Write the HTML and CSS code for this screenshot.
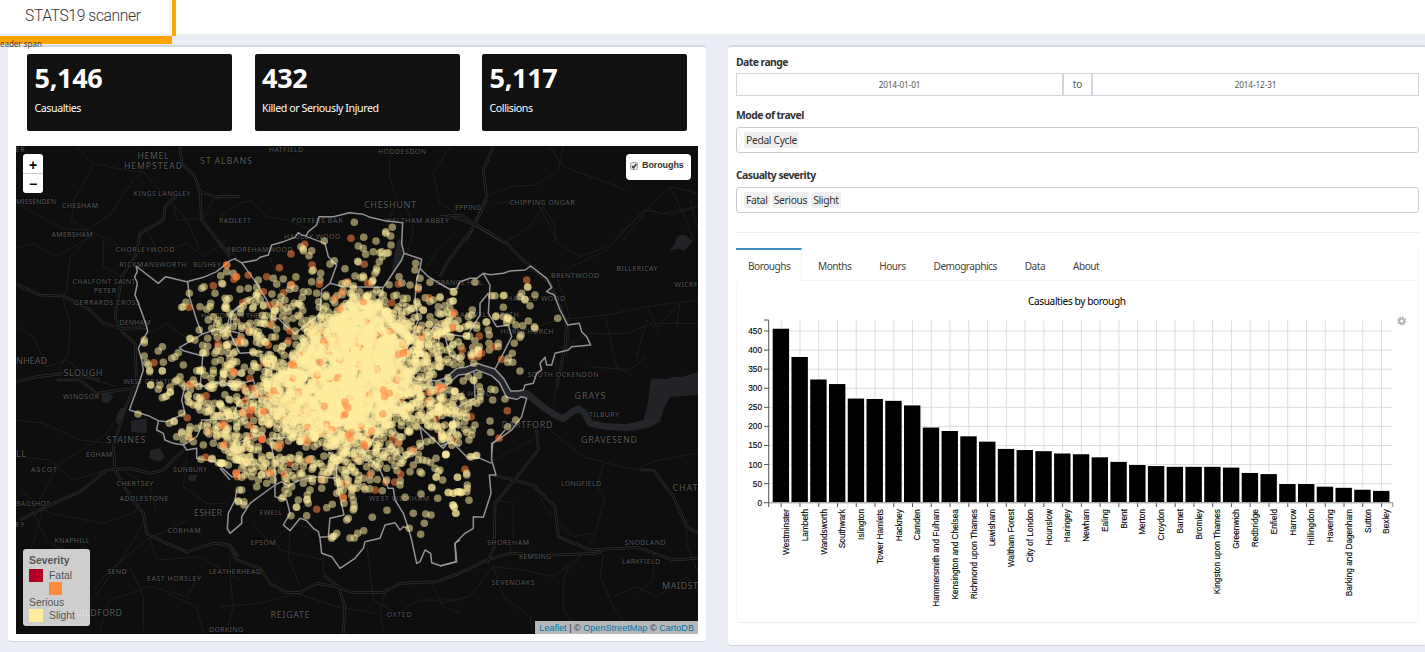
FILE: index.html
```
<!DOCTYPE html>
<html lang="en">
<head>
<meta charset="utf-8">
<title>STATS19 scanner</title>
<link rel="stylesheet" href="styles.css">
</head>
<body>
<header class="header">
  <div class="logo">STATS19 scanner</div>
  <span class="header-span">eader span</span>
</header>
<main class="content">
  <section class="box box-map">
    <div class="cards">
      <div class="card"><h3>5,146</h3><p>Casualties</p></div>
      <div class="card"><h3>432</h3><p>Killed or Seriously Injured</p></div>
      <div class="card"><h3>5,117</h3><p>Collisions</p></div>
    </div>
    <div class="map">
      <svg class="map-svg" viewBox="16 146 682 488">
        <g id="terrain"></g>
        <g id="labels"></g>
        <g id="bounds"></g>
        <g id="dots"></g>
      </svg>
      <div class="zoom"><span>+</span><span>−</span></div>
      <label class="layers"><svg width="8" height="8" viewBox="0 0 8 8"><rect x=".5" y=".5" width="7" height="7" rx="1" fill="#e4e4e4" stroke="#aaa"/><path d="M2 4l1.5 1.8L6.4 2" fill="none" stroke="#333" stroke-width="1.4"/></svg>Boroughs</label>
      <div class="legend">
        <strong>Severity</strong>
        <div class="row"><i class="fatal"></i>Fatal</div>
        <div class="row serious-swatch"><i class="serious"></i></div>
        <div class="row serious-name">Serious</div>
        <div class="row"><i class="slight"></i>Slight</div>
      </div>
      <div class="credit"><a>Leaflet</a> | © <a>OpenStreetMap</a> © <a>CartoDB</a></div>
    </div>
  </section>
  <section class="box box-controls">
    <h4>Date range</h4>
    <div class="dates"><span class="date">2014-01-01</span><span class="to">to</span><span class="date">2014-12-31</span></div>
    <h4 class="mode">Mode of travel</h4>
    <div class="select"><span>Pedal Cycle</span></div>
    <h4 class="severity">Casualty severity</h4>
    <div class="select"><span>Fatal</span><span>Serious</span><span>Slight</span></div>
    <div class="rule"></div>
    <div class="tabbox">
      <nav class="tabs">
        <span class="tab active">Boroughs</span><span class="tab">Months</span><span class="tab">Hours</span><span class="tab">Demographics</span><span class="tab">Data</span><span class="tab">About</span>
      </nav>
      <svg class="chart" id="chart" viewBox="737 281 681 341"></svg>
    </div>
  </section>
</main>
<script src="app.js"></script>
</body>
</html>
```
FILE: styles.css
```
* { box-sizing: border-box; }
body { margin: 0; height: 652px; overflow: hidden; background: #eaeef4; color: #333; font-family: "Noto Sans", sans-serif; font-size: 10.5px; }
h3, h4, p { margin: 0; }
.header { position: relative; height: 34px; background: #fff; }
.logo { position: absolute; left: 0; top: 0; width: 176px; height: 36px; padding-left: 25px; line-height: 32px; border-right: 4px solid #ffa500; font-family: Roboto, sans-serif; font-weight: 300; font-size: 15.6px; color: #333; letter-spacing: -.36px; white-space: nowrap; }
.logo::before { content: ""; position: absolute; left: 169px; top: 0; width: 1px; height: 34px; background: #eef0f4; }
.logo::after { content: ""; position: absolute; left: 0; top: 36px; width: 172px; height: 8px; background: #ffa500; }
.header-span { position: absolute; left: 0; top: 38px; z-index: 3; font-size: 8px; line-height: 12px; color: #444; letter-spacing: -.02px; }
.content { display: grid; grid-template-columns: 698px 1fr; column-gap: 22px; align-items: start; padding: 11px 0 0 8px; }
.box { background: #fff; border-top: 2px solid #d2d6de; border-radius: 3px; box-shadow: 0 1px 1px rgba(0,0,0,.1); }
.box-map { height: 596px; padding: 7px 8px; }
.box-controls { height: 600px; padding: 7px 7px 0 8px; }
.cards { display: grid; grid-template-columns: repeat(3, 205px); column-gap: 22.5px; padding-left: 11px; }
.card { height: 77px; padding: 8px 7.5px; border-radius: 2px; background: #111; color: #fff; }
.card h3 { font-size: 27px; line-height: 31px; font-weight: 700; letter-spacing: -.3px; }
.card p { margin-top: 7px; font-size: 10.6px; line-height: 16px; letter-spacing: -.4px; }
.map { position: relative; height: 488px; margin-top: 15px; overflow: hidden; background: #0e0e0e; font-family: "Liberation Sans", Arial, sans-serif; }
.map-svg { display: block; width: 682px; height: 488px; }
.zoom { position: absolute; left: 7px; top: 8px; width: 20px; height: 39px; border-radius: 3px; background: #fff; color: #000; font-size: 14px; font-weight: 700; text-align: center; }
.zoom span { display: block; height: 19px; line-height: 23px; }
.zoom span + span { border-top: 1px solid #ccc; height: 20px; line-height: 20px; }
.layers { position: absolute; right: 7px; top: 8px; display: flex; gap: 4px; width: 65px; height: 26px; padding: 7px 0 0 4px; border-radius: 4px; background: #fff; font-size: 9px; line-height: 9px; font-weight: 700; letter-spacing: -.1px; }
.layers svg { margin-top: 1px; }
.legend { position: absolute; left: 7px; bottom: 8px; width: 67px; height: 77px; padding: 5px 6px; border-radius: 3px; background: rgba(255,255,255,.8); color: #555; font-size: 10.4px; line-height: 13px; }
.legend strong { display: block; height: 15px; }
.row { display: flex; gap: 6px; height: 13px; align-items: center; }
.row i { width: 14px; height: 13px; }
.row + .row:last-child { height: 14px; }
.serious-swatch { padding-left: 20px; }
.serious-swatch i { width: 13px; }
.serious-name { padding-top: 2px; }
.fatal { background: #b10026; }
.serious { background: #fd8d3c; }
.slight { background: #ffeda0; }
.credit { position: absolute; right: 0; bottom: 0; height: 13px; padding: 0 4px; background: rgba(255,255,255,.7); color: #333; font-size: 9.15px; line-height: 14px; letter-spacing: -.02px; white-space: nowrap; }
.credit a { color: #0078a8; }
.box-controls h4 { height: 16px; font-size: 10.4px; line-height: 16px; font-weight: 700; letter-spacing: -.55px; }
.box-controls .mode { margin-top: 11px; line-height: 17px; }
.box-controls .severity { margin-top: 14px; line-height: 17px; }
.dates { display: flex; height: 23px; margin-top: 3px; line-height: 21px; text-align: center; }
.date { flex: 1; border: 1px solid #d2d6de; font-size: 8.2px; color: #555; letter-spacing: -.1px; }
.to { width: 29px; border: 1px solid #d2d6de; color: #555; font-size: 10px; line-height: 20px; }
.select { display: flex; align-items: center; gap: 2px; height: 26px; margin-top: 4px; padding-left: 7px; border: 1px solid #ccc; border-radius: 3px; }
.select span { height: 16px; padding: 0 2px; border-radius: 2px; background: #efefef; font-size: 10.3px; line-height: 16px; letter-spacing: -.33px; }
.rule { height: 1px; margin-top: 19px; background: #eee; }
.tabbox { height: 375px; margin-top: 15px; border: 1px solid #f7f7f7; border-top: 0; border-bottom: 1px solid #eee; border-radius: 3px; }
.tabs { display: flex; gap: 4px; height: 33px; border-bottom: 1px solid #f4f4f4; }
.tab { padding: 0 12px; border-top: 2px solid transparent; line-height: 33px; color: #444; font-size: 10.1px; letter-spacing: -.5px; }
.tab.active { width: 66px; height: 33px; margin-left: -1px; background: #fff; border-top-color: #3c8dbc; border-right: 1px solid #f4f4f4; }
.chart { display: block; width: 681px; height: 341px; }
.chart text { font-family: "Liberation Sans", Arial, sans-serif; font-size: 8.3px; fill: #000; stroke: #000; stroke-width: .12px; }
.chart .title { font-family: "Noto Sans", sans-serif; font-size: 10.1px; stroke: none; }
.grid { stroke: #ddd; stroke-width: 1; }
.axis { stroke: #555; stroke-width: 1; fill: none; }
.place { fill: #5a5a5a; font-family: "Noto Sans", sans-serif; stroke: #090909; stroke-width: 1.5px; paint-order: stroke; }
.bound { fill: none; stroke: #929296; stroke-width: 4.5; stroke-linejoin: round; }
.lane { fill: none; stroke: #1d1d1d; stroke-width: 3; }
.motor { fill: none; stroke: #303030; stroke-width: 8; stroke-linejoin: round; }
.motor-gap { fill: none; stroke: #0e0e0e; stroke-width: 3.5; stroke-linejoin: round; }
.water { fill: none; stroke: #25262a; stroke-width: 20; stroke-linejoin: round; }
.lake { fill: #222327; }
```
FILE: app.js
```
// Map geometry is stored in tiles: each tile has an origin and 3 units per pixel.
const TILES = { A: [0, 140], B: [220, 200], C: [440, 200], D: [0, 380], E: [220, 400], F: [440, 430], G: [350, 0] };
const tileGroup = (t, body) => `<g transform="translate(${TILES[t]}) scale(.33333)">${body}</g>`;
const byId = id => document.getElementById(id);
const lines = (cls, list) => list.map(p => `<polyline class="${cls}" points="${p}"/>`).join('');

const lanes = {
  A: ['230,20 275,68 370,90 430,95 460,130 500,170 560,240 600,330', '280,75 240,150 220,180 215,240 260,270 330,300 400,350', '50,190 120,230 185,265 260,270 330,225 365,170 400,120 430,95', '270,290 210,350 200,450 190,480 210,550 205,640 170,700', '48,325 100,310 170,350 270,290', '520,190 530,240 610,235 640,180 700,160', '50,560 100,590 140,680 200,660 280,720 350,740', '310,300 310,380 350,400 400,440', '450,580 500,550 540,580 600,620', '430,260 480,340 560,310 610,350 680,300'],
  G: ['120,440 118,530 140,600 110,680', '300,440 250,520 270,610 320,640', '640,440 625,510 560,555 480,560 410,590', '570,620 540,600 430,610', '570,620 600,680 620,720', '820,720 900,620 960,560 1043,580', '960,560 1000,640 1030,720', '1043,620 940,640 880,630 800,720', '600,440 640,500 750,540 830,570'],
  B: ['0,50 60,10 100,0', '150,170 180,260 170,320', '90,0 140,50 200,60 290,100', '560,170 580,90 560,20', '620,200 660,140 710,90', '0,140 40,160 60,190'],
  C: ['310,20 270,80 190,130 110,70', '310,20 345,80 345,125 420,170 500,140', '774,20 690,45 620,30 540,100 500,150 375,210', '240,400 350,360 500,345 620,320 774,300', '375,440 450,400 560,400 640,370 774,370', '495,350 530,500 580,530', '345,460 350,560 340,620', '620,320 650,380 720,310 710,380', '450,500 570,510 620,470', '350,230 390,350 380,480', '750,0 774,90', '590,470 620,360 660,400'],
  D: ['48,120 130,130 240,180 330,190', '60,330 150,400 310,430 400,400 440,340', '100,390 180,250 310,170 370,90', '440,410 390,500 300,630 240,700', '48,560 100,490 130,380', '280,630 330,570 440,480 560,420', '450,480 470,540 600,530 720,600', '390,560 430,650 430,750', '560,240 550,320 620,370 680,370', '300,750 330,660 450,620 560,650 600,580', '48,230 150,240 220,300 320,270', '80,360 140,480 200,520 260,500', '500,640 590,680 610,760', '370,270 450,320 470,400'],
  E: ['30,450 30,530 40,620 20,700', '210,400 205,470 240,560', '100,370 150,430 220,370 290,390', '310,460 310,520 350,560', '440,430 450,520 460,600 530,640 600,600 720,600', '0,620 120,610 230,580 350,620 470,640', '160,410 180,450 310,480', '500,560 480,640 490,700', '630,540 670,620 720,640'],
  F: ['160,90 260,40 300,10', '168,210 220,220 220,300 210,370', '280,160 320,240 400,320 460,310', '490,100 470,170 495,200 460,330 390,420', '0,520 90,500 160,410 250,420 340,440 430,370', '490,370 480,440 520,530 570,605', '390,400 370,450 370,540 410,600', '160,410 190,500 270,560 280,610', '520,500 590,470 650,500 740,440 774,480', '640,360 640,450 590,490', '600,110 660,90 774,70', '330,0 430,80 560,115 640,120', '740,270 740,340 774,430']
};
const motors = {
  A: ['540,20 545,70 585,110 600,155 605,240 660,310 690,350', '600,155 650,170 720,170', '530,165 495,200 490,240 420,280 410,340 365,410 345,530 370,580 405,610 410,730', '48,433 120,465 190,468 270,510 310,550 360,565 443,563', '48,725 110,710 200,700 300,720'],
  G: ['430,440 400,510 410,590 375,670 350,720', '310,650 375,675 450,720'],
  C: ['140,0 100,80 20,190 0,230', '0,50 65,45 110,75 200,130 260,190 330,250 380,370 375,440 350,560'],
  D: ['60,420 150,375 240,335 320,270 390,265 450,280 490,270 550,210', '410,0 370,100 340,200 345,270 390,350 430,400 440,460 500,490 560,515 640,490 690,495 715,530', '170,0 240,0 290,40 400,25'],
  E: ['0,430 30,440 50,480 120,505 150,550 200,578 240,578 290,550 350,560 400,578 490,578 540,550 650,545 720,520', '310,525 355,560 375,620 370,700'],
  F: ['0,453 80,420 140,390 210,370 300,375 350,375 470,370 490,360', '290,0 295,60 215,160 165,220 163,350 140,400', '160,135 280,165 345,230 355,320 450,360 590,352 700,390 774,385', '600,120 640,120 700,200 740,290 774,310']
};
const lakes = [
  ['D', '305,40 325,35 340,50 325,70 305,65'], ['D', '348,130 350,105 362,85 378,82 372,110 358,132'], ['D', '392,122 440,115 440,160 395,155'],
  ['D', '450,210 480,205 495,230 480,245 448,235'], ['D', '565,285 592,285 585,305 565,300'],
  ['C', '688,152 705,132 710,110 728,104 740,108 758,125 745,138 735,152 718,146'],
  ['C', '632,535 680,537 705,530 725,532 774,515 774,585 690,590 672,625 660,665 630,682 580,692 560,690 560,672 610,660 624,610'],
  ['B', '533,118 548,118 545,180 510,240'], ['G', '990,705 1020,720 985,720'], ['A', '680,320 692,320 692,337 680,337']
];
let terrain = '';
for (const t in lanes) terrain += tileGroup(t, lines('lane', lanes[t]));
for (const t in motors) terrain += tileGroup(t, lines('motor', motors[t]) + lines('motor-gap', motors[t]));
for (const [t, p] of lakes) terrain += tileGroup(t, `<polygon class="lake" points="${p}"/>`);
terrain += tileGroup('C', lines('water', ['-100,520 -70,548 -10,552 15,545 50,515 75,512 110,500 165,517 185,540 205,583 260,580 310,622 345,645 370,656 390,640 415,625 435,640 450,670 500,680 560,683 640,665']));
byId('terrain').innerHTML = terrain;

// name, centre x, centre y, width, size
const places = [
  ['HEMEL', 153, 156, 31, 8.6], ['HEMPSTEAD', 153, 166, 58, 8.6], ['ST ALBANS', 226, 161, 52, 9], ['HATFIELD', 286, 150, 34, 7], ['HODDESDON', 402, 152, 48, 7],
  ['KINGS LANGLEY', 162, 194, 57, 7], ['MISSENDEN', 36, 202, 40, 7], ['CHESHAM', 80, 206, 36, 7], ['AMERSHAM', 72, 235, 41, 7], ['RADLETT', 235, 221, 32, 7],
  ['CHORLEYWOOD', 145, 250, 59, 7], ['RICKMANSWORTH', 153, 265, 67, 7], ['BUSHEY', 207, 265, 28, 7], ['CHALFONT SAINT', 104, 282, 63, 7], ['PETER', 105, 291, 22, 7],
  ['GERRARDS CROSS', 107, 303, 66, 7], ['DENHAM', 135, 323, 31, 7], ['NHEAD', 31.5, 361, 31, 9], ['SLOUGH', 83, 373, 39, 9], ['WEST DRAYTON', 151, 382, 55, 7],
  ['POTTERS BAR', 317, 221, 51, 7], ['HADLEY WOOD', 312, 237, 56, 7], ['BOREHAMWOOD', 262, 250, 61, 7], ['CHESHUNT', 390, 205, 52, 9], ['WALTHAM ABBEY', 417, 221, 64, 7],
  ['EPPING', 468, 208, 26, 7], ['CHIPPING ONGAR', 542, 203, 65, 7], ['BILLERICAY', 637, 269, 41, 7], ['BRENTWOOD', 575, 276, 48, 7], ['WICKF', 686, 285, 23, 7],
  ['GRANGE HILL', 459, 283, 47, 7], ['HAROLD WOOD', 536, 299, 58, 7], ['CHADWELL HEATH', 484, 315, 70, 7], ['HORNCHURCH', 527, 332, 53, 7], ['SOUTH OCKENDON', 563, 375, 71, 7],
  ['GRAYS', 590, 396, 31, 9], ['TILBURY', 604, 415, 30, 7], ['DARTFORD', 527, 425, 51, 9], ['GRAVESEND', 609, 440, 56, 9], ['ABBEY WOOD', 466, 394, 50, 7],
  ['HARROW ON THE', 230, 316, 58, 7], ['HILL', 230, 325, 17, 7], ['WINDSOR', 81, 397, 36, 7], ['STAINES', 126, 440, 39, 9], ['EGHAM', 99, 455, 26, 7],
  ['ASCOT', 44, 470, 26, 7], ['SUNBURY', 190, 470, 34, 7], ['CHERTSEY', 135, 484, 37, 7], ['ADDLESTONE', 144, 499, 49, 7], ['BAGSHOT', 33, 504, 34, 7], ['LL', 21, 454, 10, 9],
  ['ESHER', 208, 513, 28, 9], ['COBHAM', 184, 531, 33, 7], ['KNAPHILL', 72, 541, 35, 7], ['EWELL', 271, 513, 23, 7], ['EPSOM', 263, 543, 25, 7], ['LEATHERHEAD', 235, 572, 52, 7],
  ['SEND', 117, 572, 19, 7], ['EAST HORSLEY', 174, 579, 54, 7], ['GUILDFORD', 95, 613, 54, 9], ['DORKING', 226, 630, 34, 7], ['REIGATE', 290, 615, 39, 9], ['OXTED', 399, 615, 25, 7],
  ['WEST WICKHAM', 399, 499, 60, 7], ['ER', 20, 150, 9, 7], ['EY', 20, 525, 9, 7], ['LONGFIELD', 581, 484, 40, 7], ['SHOREHAM', 508, 543, 42, 7], ['KEMSING', 535, 557, 32, 7],
  ['SEVENOAKS', 513, 583, 43, 7], ['SNODLAND', 645, 543, 41, 7], ['LARKFIELD', 641, 562, 38, 7], ['CHAT', 685, 488, 25, 9], ['MAIDST', 680, 586, 36, 9]
];
byId('labels').innerHTML = places.map(([n, x, y, w, s]) =>
  `<text class="place" x="${x - w / 2}" y="${y + s * .32}" font-size="${s}" textLength="${w}">${n}</text>`).join('');

const bounds = {
  A: ['408,378 475,430 497,410 560,425 610,412 650,395 690,362 708,355', '408,378 412,395 404,410 412,430 405,465 415,490 430,530 440,560 443,575 422,610 415,625 425,660 430,690 410,750 388,810', '563,425 568,470 590,540 606,583 650,568 700,575 720,580', '606,583 538,623 550,632 608,648 605,690 600,740', '680,570 690,520 720,495', '600,740 655,730 700,740'],
  B: ['45,178 65,188 110,180 120,172 145,165 155,135 190,125 225,112 235,98 245,105 258,108 265,95 290,75 297,50 340,50 388,38 430,43 450,52 495,62 548,68 545,130 552,160 605,178 600,205 625,230 650,245 690,268 715,265', '65,188 110,250 140,300 155,335 155,360 175,355 200,380 225,400 265,370 300,340 305,270 330,250 350,195 325,170 315,130 260,110', '330,250 370,260 490,262 545,180 552,160', '490,262 465,330 465,380', '600,205 590,240 585,300 595,360 570,420 550,490 580,530', '0,400 30,380 35,340 70,310 120,280', '30,400 60,460 130,455', '520,380 545,400 540,450', '0,555 50,555 100,540 120,610', '635,395 640,380 660,385 655,440', '450,535 500,530 530,560', '160,480 150,560 155,610', '40,640 60,600 110,590'],
  C: ['-3,250 30,268 50,265 60,245 90,235 110,235 130,220 150,224 190,220 210,213 255,210 272,198 320,235 335,262 320,275 343,285 360,330 383,375 418,370 425,395 440,410 452,435 395,440 385,450 345,460 335,495 320,495 315,472 300,490 305,510 290,520 280,550 255,555 250,570 235,573', '-100,512 -70,538 -10,542 15,535 50,505 75,502 110,490 165,507 192,537 212,573 235,573', '-100,530 -75,560 -10,562 20,555 55,525 80,522 110,510 155,527 178,548 200,592 230,598 245,590 260,595 245,650 215,690 180,715 158,730 155,760', '130,220 150,255 145,340 170,380 205,375 215,410 185,470 165,507', '145,280 120,310 120,345 80,410 0,400', '15,410 30,465 60,480', '102,515 105,595 45,625 40,680 20,730 0,740'],
  D: ['388,90 445,107 475,122 500,125 555,100 545,60 555,18 600,12 620,25 655,5 680,10 720,15', '475,122 470,150 490,160 495,180 520,190 550,195 560,210 590,205 590,235 645,245 695,290 720,290', '600,150 605,120 670,118 720,110', '550,195 590,170 600,150'],
  E: ['50,270 45,300 25,340 22,385 30,400 65,370 65,350 90,310 165,255', '165,255 165,290 200,300 210,340 190,375 210,392 240,355 260,362 280,385 295,395 300,415 305,460 335,470 360,505 405,475 430,445 435,425 480,415 495,375 525,368 540,390 550,380 565,385', '565,385 575,420 590,490 600,485 615,450 632,460 635,488 662,497 708,485 705,430 720,420', '165,255 165,190 150,118 210,110 240,105', '165,255 185,245 205,258 240,240 285,230 350,235', '350,235 360,290 372,345 330,355 325,410 300,412', '350,235 350,180 380,145 430,155 480,210 505,265 520,265 525,300 550,340 565,385', '430,155 520,140 550,180 610,130 600,80 670,145 690,120 720,140', '720,20 700,50 705,100 690,120', '490,30 490,70 440,150', '0,205 30,240', '60,125 120,105', '380,110 415,40', '325,155 350,180'],
  F: ['195,0 170,30 155,40 155,90 168,135 148,135 153,190 130,262 100,260 100,295 75,310 45,340 50,395 0,408', '0,50 35,35 80,80 120,85 155,100']
};
let b = '';
for (const t in bounds) b += tileGroup(t, lines('bound', bounds[t]));
byId('bounds').innerHTML = b;

// Casualty points; "o" marks serious, "f" fatal.
const points = {
  A: '680,375o 662,407 700,400 708,410o 668,432 605,445 612,440 640,437o 645,460 568,460 558,487 550,500 545,502 567,502o 600,500 632,490 630,500 620,508 680,480 678,495 680,505 640,530 625,540 690,520 598,570 650,550 635,565 570,595 570,597 585,600 623,595 652,592 676,588 433,600 433,608 487,620 475,633 433,648 462,668o 440,668 445,675 449,690 449,695 487,693 487,692 490,667 515,655 525,650 535,638 610,638 608,638 655,620 655,612o 645,640 650,632 645,665 550,675 600,690 600,694 607,690 590,692 640,700 640,690 675,703 671,703 700,695o 540,710 530,720 570,732o 555,740 685,640 700,640 710,665 692,672 452,735 480,735 510,742 700,560 718,605o',
  B: '403,67 393,115o 431,112 468,123 497,95 497,100 517,82 512,108 513,135 415,138 313,123 243,140 254,133o 250,152 250,146 275,152 267,167 213,162o 178,203o 20,195o 276,195o 330,192 343,182 375,206 415,186 413,184 433,193o 437,163 430,145 485,155 480,158 500,160 487,170 478,185 470,205 470,212 465,220 458,243 458,241 460,155 505,158 20,215 50,230o 42,238o 85,225o 140,230o 115,240 160,235 190,237 215,253o 225,265 250,275 275,245 280,210 276,213 302,220 300,240 298,253o 265,275 290,280 296,305 235,312 183,290 195,300 205,335 165,330 166,334 60,268 85,265 110,262 130,275o 68,308o 70,318 100,320 130,318 90,300 150,315o 5,250 15,295 28,295 15,325 15,320 383,245o 383,250 405,228 430,228 443,250o 535,252o 537,230 570,255 587,190 585,210 600,235 595,268o 595,262 630,247 627,293o 640,300 660,293 700,275 700,303 655,320 655,340 703,340o 690,325 630,350 610,330 515,308o 360,328o 345,295o 365,278o 318,285 318,290 150,373o 130,370 135,372 90,370 65,385 65,378 115,395 60,420o 75,430 73,425 210,393o 145,435o 20,435 45,455 40,350 50,365 20,380 700,383o 650,403 605,412o 600,440 650,440 640,460 655,480 660,500 610,490 630,500 600,460 570,420 550,460o 625,430 665,395 680,390 650,455 655,465 400,265 390,280 410,290 430,305o 400,300 440,290 470,270 490,285 450,320 480,305 530,285 550,295 560,320 530,330 545,335 570,330 390,310 325,335 300,355 240,350 245,370 220,355 200,360 110,405 170,445 130,480 40,515o 65,520 90,535o 10,520 10,515 30,475 95,565o 120,575 625,538 655,562o 650,575o 625,578o 640,570 690,570 705,573 668,563o 490,570o 508,580o 600,582 575,580 575,325 560,335 545,345 530,355 515,365 505,350 520,340 535,320 548,310 375,340 395,345 415,335 430,345 450,350 470,350 350,360 340,375 360,380 320,370 625,395 640,400 660,395 675,388 690,385',
  C: '105,247 42,277 38,303 30,305 0,290 42,338o 22,337 10,340 97,330 95,345 85,350 260,240o 263,262 263,260 245,280 240,290 255,298 255,300 270,317 285,285 190,287 165,287 155,287 192,286 190,322 168,348 167,350 205,355 200,358 215,360 203,352 200,368 190,350 228,375 248,377 265,363 285,385 283,380 243,405 240,412 223,430 353,355 88,372 92,375 85,378 75,380 110,375 110,385 140,365 138,367 40,383o 20,385 60,385 58,386 20,395 5,400 118,408o 80,408 79,407 145,390 148,405 147,430 148,450 162,440o 175,430 175,440 185,478o 217,460 205,475 218,487 203,487 115,450 115,462 118,440 125,460o 67,450o 40,432 38,435 55,425 30,445 22,450 60,475 63,492 0,480 0,500 240,513 85,530 100,540 102,542 118,560 122,575 120,590 153,568 165,570 158,600 120,600 110,610 195,597 45,575 43,574 5,563o 10,575 70,600 60,590 85,622 57,635 70,638 78,640 202,632o 227,660 203,680 150,663 105,675 75,688 97,690 95,705 55,707 87,720 152,697 177,715o 37,675 38,672 37,690 5,680 20,705 5,720 0,620',
  D: '452,15 475,28 487,53 495,50 511,37 511,36 500,48 570,13o 618,47o 565,45 563,50 565,65 570,68 590,50 580,75 600,70 600,90 595,80 625,70 620,82 630,90 625,95 640,105 660,70 660,75 685,95 682,98 690,60 710,50 700,20 703,22 545,10 525,5 580,0 414,102 562,113o 545,100 523,125 522,123 508,130 605,137 590,145 568,150 565,160 570,140 545,155 545,160 530,170 550,180 568,172o 565,170 580,185 625,155o 620,155 650,170 650,165 667,130o 670,140o 670,160 690,165 672,195o 670,200 675,210 640,190 610,195 603,238 617,232o 637,235 635,238 662,250 665,250 672,250 655,248 700,205 710,240 709,235 708,280o 712,290o 715,365 718,330 640,120 655,140 680,150',
  E: '70,37f 68,38o 68,38 95,30o 93,29o 130,35o 132,34o 92,78o 127,118o 127,118o 127,119f 126,118o 125,65 128,68 173,140o 12,135o 50,222o 48,218o 5,190 4,189 25,195 65,270 55,303 72,305 72,315 150,220o 149,219o 193,223o 170,85 125,170 130,200 110,200 80,190 78,186 70,170 90,170 65,205 75,225 95,230 115,240 140,250 160,240 60,150 100,150 40,125 80,130 115,150 72,196 60,180 100,185 95,205 82,215 100,215 65,232 110,260 140,225 125,225 40,30 15,50 10,75o 25,85 50,65 50,80 15,105 45,110 5,20 20,30 90,10 185,295 195,270 215,260 205,280 190,290 235,300 230,322 229,321 260,300 262,298 262,285 265,310 270,270 213,347 260,347 290,328o 305,240o 304,239 305,265 320,323 337,313 350,280 370,290o 370,295o 372,310 395,270 393,262 400,300 402,315 400,330 402,325 385,355 380,360 375,250o 385,240 350,235 410,265 430,260 435,268 465,270o 487,272 457,352 501,331 350,400 343,408 335,415 337,410 390,414 403,414 413,400 431,392 540,255 542,223o 555,292 580,340 617,342 633,345 613,370 602,403 568,385 603,282 653,295 635,262 636,264 648,232 649,231 712,232 685,278 700,280 715,275 700,315 703,320 707,340 648,175 678,163 677,164 645,205 655,215 600,215 605,220 608,180 595,180 580,148o 560,165 550,180 580,195 570,215 540,190 515,180 500,205 505,155 490,165 470,150 455,165 455,190 440,200 450,225o 535,130o 540,150 455,92o 655,20 654,22 630,35 605,15 570,20 600,45 605,40 625,75 650,75 675,75 697,75 698,77 665,100 685,110 620,125 590,80 560,55 545,65 570,95 540,110 510,100 480,130 500,240 450,240 530,170 360,250 385,255 400,265 370,270 395,285 415,240 430,235 210,190o 180,190 190,200 215,175 225,200 205,215 240,180 250,200 265,180o 280,195 300,190 310,215 240,220 265,235 225,235 330,200 340,215 250,250 385,105o 392,98o 390,115o 375,43o 375,5o 432,133o 433,137o 262,127o',
  F: '0,120 8,150 18,73 17,74 90,80 95,80 110,76 108,77 75,118o 80,130 80,135 53,142 82,165 82,175 25,187 40,190 52,185 65,187 62,188 60,185 80,185 87,211 38,225 42,232 48,250'
};
const COLOURS = { '': '#ffeda0', o: '#fd8440', f: '#e0303a' };
const dot = (x, y, k) => `<circle cx="${x.toFixed(1)}" cy="${y.toFixed(1)}" r="3.8" fill="${COLOURS[k]}" fill-opacity="${k ? .55 : .52}"/>`;
let seed = 19;
const rnd = () => (seed = (seed * 16807) % 2147483647) / 2147483647;
const gauss = () => Math.sqrt(-2 * Math.log(rnd())) * Math.cos(6.28318 * rnd());
// count, centre x, centre y, spread x, spread y, share of serious points
const clusters = [
  [380, 333, 385, 80, 48, .035], [170, 355, 335, 36, 28, .03], [110, 425, 340, 36, 25, .03], [120, 240, 388, 32, 38, .05],
  [130, 330, 440, 55, 18, .04], [70, 240, 455, 20, 16, .04], [70, 345, 465, 26, 20, .03], [60, 445, 430, 30, 26, .03],
  [30, 250, 305, 25, 20, .04]
];
// centre x, centre y, radius x, radius y: the evenly filled inner boroughs
const fills = [
  [750, 337, 385, 66, 48], [420, 350, 350, 48, 38], [250, 370, 395, 50, 32], [250, 310, 400, 55, 28], [230, 365, 325, 30, 30], [130, 405, 352, 28, 28], [120, 335, 430, 50, 18], [90, 410, 405, 45, 20]
];
let d = '';
for (const [n, cx, cy, rx, ry] of fills) for (let i = 0; i < n; i++) {
  const a = rnd() * 6.28318, r = Math.sqrt(rnd()) * (.9 + rnd() * .25);
  d += dot(cx + Math.cos(a) * r * rx, cy + Math.sin(a) * r * ry, rnd() < .05 ? 'o' : '');
}
for (const [n, cx, cy, sx, sy, share] of clusters) for (let i = 0; i < n; i++) {
  const x = cx + gauss() * sx, y = cy + gauss() * sy, k = rnd() < share ? 'o' : '';
  if (Math.hypot((x - 338) / 148, (y - 382) / 110) < 1) d += dot(x, y, k);
}
for (const t in points) for (const p of points[t].split(' ')) {
  const [, x, y, k] = p.match(/(-?\d+),(-?\d+)([of]?)/);
  d += dot(TILES[t][0] + x / 3, TILES[t][1] + y / 3, k);
}
byId('dots').innerHTML = d;

const data = [['Westminster', 456], ['Lambeth', 382], ['Wandsworth', 323], ['Southwark', 311], ['Islington', 273], ['Tower Hamlets', 272], ['Hackney', 267], ['Camden', 255], ['Hammersmith and Fulham', 197], ['Kensington and Chelsea', 188], ['Richmond upon Thames', 174], ['Lewisham', 160], ['Waltham Forest', 141], ['City of London', 138], ['Hounslow', 135], ['Haringey', 129], ['Newham', 127], ['Ealing', 119], ['Brent', 107], ['Merton', 99], ['Croydon', 96], ['Barnet', 94], ['Bromley', 94], ['Kingston upon Thames', 94], ['Greenwich', 92], ['Redbridge', 78], ['Enfield', 75], ['Harrow', 49], ['Hillingdon', 49], ['Havering', 42], ['Barking and Dagenham', 39], ['Sutton', 34], ['Bexley', 31]];
const Y0 = 502.7, K = .3815, X0 = 781.2, STEP = 18.76;
let c = '<text class="title" x="1028" y="305" textLength="98">Casualties by borough</text>';
for (let v = 50; v <= 450; v += 50) c += `<path class="grid" d="M769 ${Y0 - v * K}H1392.5"/>`;
data.forEach((r, i) => { c += `<path class="grid" d="M${X0 + i * STEP} 319.5V502"/>`; });
data.forEach(([n, v], i) => {
  const x = X0 + i * STEP;
  c += `<rect x="${x - 9}" y="${Y0 - v * K - .8}" width="17.4" height="${v * K + .3}" fill="#fff"/><rect x="${x - 8.5}" y="${Y0 - v * K}" width="16.4" height="${v * K - .7}"/>`;
  c += `<path class="axis" d="M${x} 503v4"/><text transform="translate(${x + 7.8} 509) rotate(-90)" text-anchor="end">${n}</text>`;
});
for (let v = 0; v <= 450; v += 50) c += `<path class="axis" d="M764 ${Y0 - v * K}h5"/><text x="762" y="${Y0 - v * K + 3}" text-anchor="end">${v}</text>`;
c += '<path class="axis" d="M764 320h4.7V507"/><path d="M769 502.8H1392.7V507" fill="none" stroke="#888"/>';
c += '<g transform="translate(1401.7 321)" fill="none" stroke="#b3b3b3"><circle r="2.4" stroke-width="1.9"/><circle r="3.8" stroke-width="1.5" stroke-dasharray="1.6 1.385"/></g>';
byId('chart').innerHTML = c;
```
